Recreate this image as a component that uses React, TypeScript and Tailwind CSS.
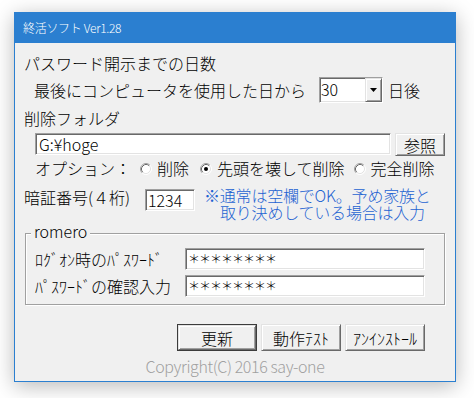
import React from "react";

const sunken =
  "border border-t-[#a0a0a0] border-l-[#a0a0a0] border-b-white border-r-white shadow-[inset_1px_1px_0_#696969,inset_-1px_-1px_0_#e3e3e3] bg-white";
const raised =
  "border border-t-[#e3e3e3] border-l-[#e3e3e3] border-b-[#696969] border-r-[#696969] shadow-[inset_1px_1px_0_#ffffff,inset_-1px_-1px_0_#a0a0a0] bg-[#f0f0f0]";

function Radio({ checked }: { checked?: boolean }) {
  return (
    <svg width="12" height="12" viewBox="0 0 12 12" className="shrink-0">
      <circle cx="6" cy="6" r="5" fill="white" />
      <path d="M2.11 9.89 A5.5 5.5 0 0 1 9.89 2.11" fill="none" stroke="#a0a0a0" />
      <path d="M9.89 2.11 A5.5 5.5 0 0 1 2.11 9.89" fill="none" stroke="#ffffff" />
      <path d="M2.82 9.18 A4.5 4.5 0 0 1 9.18 2.82" fill="none" stroke="#696969" />
      <path d="M9.18 2.82 A4.5 4.5 0 0 1 2.82 9.18" fill="none" stroke="#e3e3e3" />
      {checked && <circle cx="6" cy="6" r="2" fill="black" />}
    </svg>
  );
}

function Pw() {
  return (
    <div className={`w-[240px] h-[22px] pl-[2px] leading-[20px] text-[12px] tracking-[-1px] ${sunken}`}>
      ＊＊＊＊＊＊＊＊
    </div>
  );
}

export default function App() {
  return (
    <div className="w-[474px] h-[398px] bg-white pl-[14px] pt-[12px] font-['Noto_Sans_CJK_JP',sans-serif] font-light text-[16px] text-black">
      <div className="w-[442px] h-[370px] border border-[#2b7fd0] bg-[#f0f0f0] shadow-[0_4px_20px_rgba(0,0,0,0.28)] flex flex-col">
        <div className="h-[30px] shrink-0 bg-[#2b7fd0] text-white text-[12px] tracking-[-0.3px] pl-[8px] flex items-center">
          終活ソフト Ver1.28
        </div>

        {/* Row 1 */}
        <div className="mt-[9px] h-[22px] pl-[9px] flex items-center leading-[22px] whitespace-nowrap">
          パスワード開示までの日数
        </div>

        {/* Row 2 */}
        <div className="mt-[3px] h-[26px] pl-[19px] flex items-center whitespace-nowrap">
          <span className="w-[285px] shrink-0 leading-[22px]">最後にコンピュータを使用した日から</span>
          <div className={`w-[64px] h-[26px] shrink-0 flex items-stretch ${sunken}`}>
            <div className="flex-1 pl-[1px] pt-[1px] leading-[20px]">30</div>
            <div className={`w-[17px] flex items-center justify-center ${raised}`}>
              <svg width="7" height="4" viewBox="0 0 7 4">
                <polygon points="0,0 7,0 3.5,4" fill="black" />
              </svg>
            </div>
          </div>
          <span className="ml-[5px] leading-[22px]">日後</span>
        </div>

        {/* Row 3 */}
        <div className="mt-[4px] h-[22px] pl-[9px] flex items-center leading-[22px]">削除フォルダ</div>

        {/* Row 4 */}
        <div className="mt-[4px] h-[23px] pl-[20px] flex items-start">
          <div className={`w-[356px] h-[22px] pl-[3px] leading-[20px] ${sunken}`}>G:¥hoge</div>
          <div className={`ml-[4px] w-[50px] h-[23px] flex items-center justify-center leading-[20px] ${raised}`}>
            参照
          </div>
        </div>

        {/* Row 5 */}
        <div className="mt-[1px] h-[22px] pl-[20px] flex items-center leading-[22px] whitespace-nowrap">
          <span className="w-[105px] shrink-0">オプション：</span>
          <div className="mt-[2px] flex"><Radio /></div>
          <span className="ml-[5px]">削除</span>
          <div className="ml-[11px] mt-[2px] flex"><Radio checked /></div>
          <span className="ml-[5px]">先頭を壊して削除</span>
          <div className="ml-[9px] mt-[2px] flex"><Radio /></div>
          <span className="ml-[5px]">完全削除</span>
        </div>

        {/* Row 6 */}
        <div className="mt-[8px] h-[34px] pl-[9px] flex items-start whitespace-nowrap">
          <span className="w-[121px] shrink-0 mt-[1px] leading-[18px]">暗証番号(４桁)</span>
          <div className={`mt-[2px] w-[50px] h-[22px] pl-[2px] leading-[20px] ${sunken}`}>1234</div>
          <div className="ml-[9px] text-[#1e63d2] leading-[17px] tracking-[-0.2px]">
            <div>※通常は空欄でOK。予め家族と</div>
            <div className="pl-[16px]">取り決めしている場合は入力</div>
          </div>
        </div>

        {/* Group */}
        <div className="mt-[12px] ml-[10px] w-[420px] relative border border-[#a0a0a0] shadow-[1px_1px_0_#ffffff,inset_1px_1px_0_#ffffff] pl-[9px] pt-[14px] pb-[7px]">
          <span className="absolute left-[5px] top-[-14px] px-[3px] bg-[#f0f0f0] leading-[22px]">romero</span>
          <div className="h-[22px] flex items-center">
            <span className="w-[150px] shrink-0 leading-[22px] whitespace-nowrap">ﾛｸﾞｵﾝ時のﾊﾟｽﾜｰﾄﾞ</span>
            <Pw />
          </div>
          <div className="mt-[5px] h-[22px] flex items-center">
            <span className="w-[150px] shrink-0 leading-[22px] whitespace-nowrap">ﾊﾟｽﾜｰﾄﾞの確認入力</span>
            <Pw />
          </div>
        </div>

        {/* Buttons */}
        <div className="mt-[19px] ml-[162px] flex gap-[4px]">
          <div className="w-[80px] h-[27px] border border-[#3c3c3c] flex">
            <div className={`flex-1 flex items-center justify-center leading-[20px] ${raised}`}>更新</div>
          </div>
          <div className={`w-[80px] h-[27px] flex items-center justify-center leading-[20px] ${raised}`}>動作ﾃｽﾄ</div>
          <div className={`w-[80px] h-[27px] flex items-center justify-center leading-[20px] ${raised}`}>ｱﾝｲﾝｽﾄｰﾙ</div>
        </div>

        {/* Copyright */}
        <div className="mt-[5px] text-center text-[16px] tracking-[-0.4px] leading-[20px] text-[#a0a0a0]">
          Copyright(C) 2016 say-one
        </div>
      </div>
    </div>
  );
}
